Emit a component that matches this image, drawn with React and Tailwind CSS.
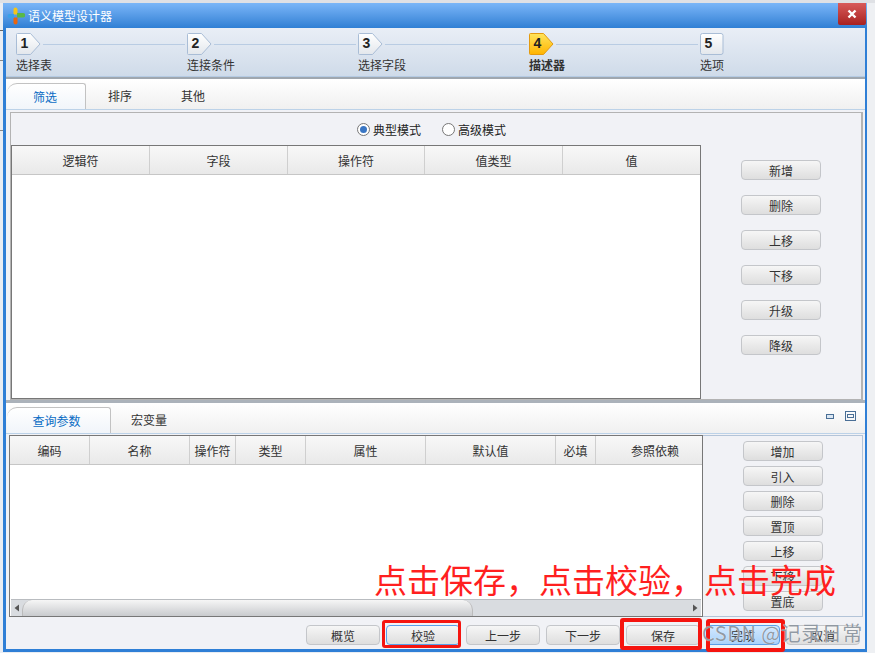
const font = { fontFamily: '"Noto Sans CJK SC", "Liberation Sans", sans-serif' };

function Step({ n, label, state }) {
  const active = state === 'active';
  const last = state === 'last';
  return (
    <div className={last ? 'w-[60px]' : 'w-[171px]'}>
      <div className="flex items-center h-[24px]">
        <div className="relative w-[25px] h-[24px] shrink-0">
          <svg width="25" height="24" viewBox="0 0 25 24" className="block">
            <defs>
              <linearGradient id={`g${n}`} x1="0" y1="0" x2="0" y2="1">
                <stop offset="0" stopColor={active ? '#ffe45c' : '#ffffff'} />
                <stop offset="1" stopColor={active ? '#ffb400' : '#e3e7ec'} />
              </linearGradient>
            </defs>
            {last ? (
              <rect x="0.5" y="1.5" width="22.5" height="21" rx="2" fill={`url(#g${n})`} stroke="#a9bdd6" />
            ) : (
              <path d="M0.5 2.5a1 1 0 0 1 1-1H14.5L24 12L14.5 22.5H1.5a1 1 0 0 1-1-1Z" fill={`url(#g${n})`} stroke={active ? '#e39a10' : '#a9bdd6'} />
            )}
          </svg>
          <span className="absolute left-[-1px] top-[1px] w-[19px] text-center text-[14px] leading-[21px] font-bold text-[#222]" style={{ fontFamily: '"Liberation Sans", sans-serif' }}>{n}</span>
        </div>
        {!last && <div className="flex-1 h-px bg-[#b9cce3] ml-[2px] mr-[2px]" />}
      </div>
      <div className={`text-[12px] leading-[17px] text-[#333] ${active ? 'font-bold' : ''}`}>{label}</div>
    </div>
  );
}

function Btn({ children, className = '' }) {
  return (
    <div className={`h-[20px] rounded-[4px] border border-[#c4c6ca] bg-gradient-to-b from-[#f6f6f6] to-[#dedede] text-[12px] leading-[19px] text-center text-[#333] ${className}`}>
      {children}
    </div>
  );
}

function HeaderRow({ cols }) {
  return (
    <div className="flex h-[29px] border-b border-[#c6c6c6] bg-gradient-to-b from-[#f8f8f8] to-[#e9e9e9] shrink-0">
      {cols.map(([t, w, extra], i) => (
        <div key={i} className={`h-full text-[12px] leading-[30px] text-center text-[#333] ${i < cols.length - 1 ? 'border-r border-[#cfcfcf]' : ''} ${extra || ''}`} style={{ width: w }}>{t}</div>
      ))}
    </div>
  );
}

function Radio({ on, label }) {
  return (
    <div className="flex items-center gap-[3px]">
      <div className="w-[13px] h-[13px] rounded-full border border-[#777] bg-white flex items-center justify-center">
        {on && <div className="w-[7px] h-[7px] rounded-full bg-[#3a76c4]" />}
      </div>
      <span className="text-[12px] leading-[16px] text-[#222]">{label}</span>
    </div>
  );
}

export default function App() {
  return (
    <div className="relative w-[875px] h-[653px] overflow-hidden bg-[#e9edf3]" style={font}>
      <div className="h-[3px] bg-[#dfe1e5]" />
      <div className="flex">
        <div className="w-[3px] h-[650px] shrink-0" />
        {/* window */}
        <div className="w-[864px] h-[649px] flex flex-col bg-[#2f7fd6] shrink-0">
          {/* title bar */}
          <div className="h-[25px] flex items-center bg-gradient-to-b from-[#7ab6f8] to-[#2f7fd4] shrink-0 relative">
            <svg width="18" height="18" viewBox="0 0 18 18" className="ml-[4px]">
              <path d="M6.5 2.5a2 2 0 0 1 4 0V7.5H6.5Z" fill="#f5c518" />
              <path d="M10 6h6a2 2 0 0 1 0 4.5H10Z" fill="#58b947" />
              <path d="M6.5 10.5H10.5V15.5a2 2 0 0 1-4 0Z" fill="#e8650f" />
              <path d="M7 7H2.5a2 2 0 0 0 0 4H7Z" fill="#3aa0e8" />
            </svg>
            <span className="ml-[3px] text-[12px] text-white leading-[16px]">语义模型设计器</span>
            <div className="absolute right-[1px] top-0 w-[28px] h-[22px] rounded-b-[2px] bg-gradient-to-b from-[#d85a5a] to-[#a82020] flex items-center justify-center">
              <svg width="10" height="10" viewBox="0 0 10 10"><path d="M1.5 1.5L8.5 8.5M8.5 1.5L1.5 8.5" stroke="#fff" strokeWidth="2.4" /></svg>
            </div>
          </div>
          {/* body */}
          <div className="ml-[3px] mr-[2px] mb-[3px] flex flex-col flex-1 min-h-0 bg-[#f1f2f6]">
            {/* steps */}
            <div className="h-[49px] px-[10px] pt-[4px] flex bg-gradient-to-b from-[#e9eef6] to-[#cfdbe9] border-b border-[#b5cbe3] shrink-0">
              <Step n="1" label="选择表" />
              <Step n="2" label="连接条件" />
              <Step n="3" label="选择字段" />
              <Step n="4" label="描述器" state="active" />
              <Step n="5" label="选项" state="last" />
            </div>
            <div className="h-[2px] bg-[#9fa7af] shrink-0" />
            {/* top tabs */}
            <div className="h-[31px] flex items-end pl-[1px] bg-gradient-to-b from-white to-[#f0f0f0] border-b border-[#bcd2e8] shrink-0">
              <div className="w-[79px] h-[26px] pr-[2px] rounded-tl-[10px] rounded-tr-[3px] border-t border-r border-[#c2c2c2] bg-gradient-to-b from-white to-[#f1f5fa] text-[12px] leading-[26px] text-center text-[#0a6cc4]">筛选</div>
              <div className="w-[68px] h-[26px] text-[12px] leading-[26px] text-center text-[#333]">排序</div>
              <div className="w-[78px] h-[26px] text-[12px] leading-[26px] text-center text-[#333]">其他</div>
            </div>
            {/* filter panel */}
            <div className="ml-[4px] mr-[2px] mt-[2px] h-[288px] border border-[#b3b3b3] border-r-2 flex flex-col bg-[#f1f2f6] shrink-0">
              <div className="h-[32px] flex items-center justify-center gap-[21px] pt-[1px] pr-[9px] shrink-0">
                <Radio on label="典型模式" />
                <Radio label="高级模式" />
              </div>
              <div className="flex flex-1 min-h-0">
                <div className="w-[690px] h-[254px] border border-[#777] bg-white flex flex-col shrink-0">
                  <HeaderRow cols={[['逻辑符', 138], ['字段', 138], ['操作符', 137], ['值类型', 138], ['值', 137]]} />
                </div>
                <div className="flex-1 flex flex-col items-center gap-[15px] pt-[15px]">
                  {['新增', '删除', '上移', '下移', '升级', '降级'].map((t) => <Btn key={t} className="w-[80px]">{t}</Btn>)}
                </div>
              </div>
            </div>
            <div className="h-[3px] bg-[#abb2ba] shrink-0" />
            {/* bottom tabs */}
            <div className="h-[31px] flex items-end pl-[1px] bg-gradient-to-b from-white to-[#f0f0f0] border-b border-[#bcd2e8] shrink-0 relative">
              <div className="w-[104px] h-[26px] pr-[4px] rounded-tl-[10px] rounded-tr-[3px] border-t border-r border-[#c2c2c2] bg-gradient-to-b from-white to-[#f1f5fa] text-[12px] leading-[26px] text-center text-[#0a6cc4]">查询参数</div>
              <div className="w-[76px] h-[26px] text-[12px] leading-[26px] text-center text-[#333]">宏变量</div>
              <div className="ml-auto mr-[9px] mb-[12px] flex items-center gap-[11px]">
                <div className="w-[8px] h-[5px] border border-[#4a6f96] bg-[#dbe7f3]" />
                <div className="w-[11px] h-[10px] border border-[#4a6f96] flex items-center justify-center"><div className="w-[7px] h-[4px] border border-[#4a6f96]" /></div>
              </div>
            </div>
            {/* bottom panel */}
            <div className="flex h-[182px] mt-[1px] ml-[3px] mr-[2px] shrink-0">
              <div className="w-[694px] border border-[#777] bg-white flex flex-col shrink-0">
                <HeaderRow cols={[['编码', 80], ['名称', 100], ['操作符', 46], ['类型', 70], ['属性', 120], ['默认值', 130], ['必填', 40], ['参照依赖', 106, 'pl-[12px]']]} />
                <div className="flex-1" />
                <div className="h-[17px] mx-[1px] flex items-center bg-[#d9dce0] border-t border-[#b9bcc0] shrink-0">
                  <svg width="11" height="16" viewBox="0 0 11 16" className="shrink-0"><path d="M8 4.5V11.5L3.5 8Z" fill="#555" /></svg>
                  <div className="w-[451px] h-full rounded-t-[10px] border-x border-[#bbb] bg-gradient-to-b from-[#f6f6f6] to-[#c9cbce]" />
                  <div className="flex-1" />
                  <svg width="11" height="16" viewBox="0 0 11 16" className="shrink-0"><path d="M3 4.5V11.5L7.5 8Z" fill="#555" /></svg>
                </div>
              </div>
              <div className="flex-1 border-y border-r border-[#b3c4d8] flex flex-col items-center gap-[5px] pt-[5px]">
                {['增加', '引入', '删除', '置顶', '上移', '下移', '置底'].map((t) => <Btn key={t} className="w-[80px]">{t}</Btn>)}
              </div>
            </div>
            {/* footer */}
            <div className="flex-1 flex items-start justify-end gap-[6px] pt-[8px] pr-[5px]">
              {['概览'].map((t) => <Btn key={t} className="w-[74px]">{t}</Btn>)}
              <Btn className="w-[74px] !border-[#5a9ee8]">校验</Btn>
              {['上一步', '下一步', '保存'].map((t) => <Btn key={t} className="w-[74px]">{t}</Btn>)}
              <Btn className="w-[74px] !from-[#d3e8ff] !to-[#a9d2fa] !border-[#5a9ee8]">完成</Btn>
              <Btn className="w-[74px]">取消</Btn>
            </div>
          </div>
        </div>
        <div className="flex-1 bg-[#eef0f3]" />
      </div>

      {/* fragments of the page behind the window */}
      <div className="absolute left-0 top-[30px] w-[3px] h-px bg-[#666]" />
      <div className="absolute left-0 top-[60px] w-[3px] h-px bg-[#888]" />
      <div className="absolute left-0 top-[130px] w-[3px] h-px bg-[#888]" />

      {/* annotations over the screenshot */}
      <div className="absolute left-[374px] top-[556px] text-[33px] leading-[46px] whitespace-nowrap text-[#ff1f1f]">点击保存，点击校验，点击完成</div>
      <div className="absolute left-[382px] top-[620px] w-[79px] h-[28px] rounded-[3px] border-[3px] border-[#f5140f]" />
      <div className="absolute left-[620px] top-[618px] w-[82px] h-[32px] rounded-[3px] border-[4px] border-[#f5140f]" />
      <div className="absolute left-[706px] top-[619px] w-[79px] h-[33px] rounded-[3px] border-[4px] border-[#f5140f]" />
      <div className="absolute left-[702px] top-[620px] text-[20px] leading-[26px] whitespace-nowrap tracking-[0.5px] text-[#6f7a86]/75 [text-shadow:0_0_1px_#ffffff]">CSDN @记录日常</div>
    </div>
  );
}
